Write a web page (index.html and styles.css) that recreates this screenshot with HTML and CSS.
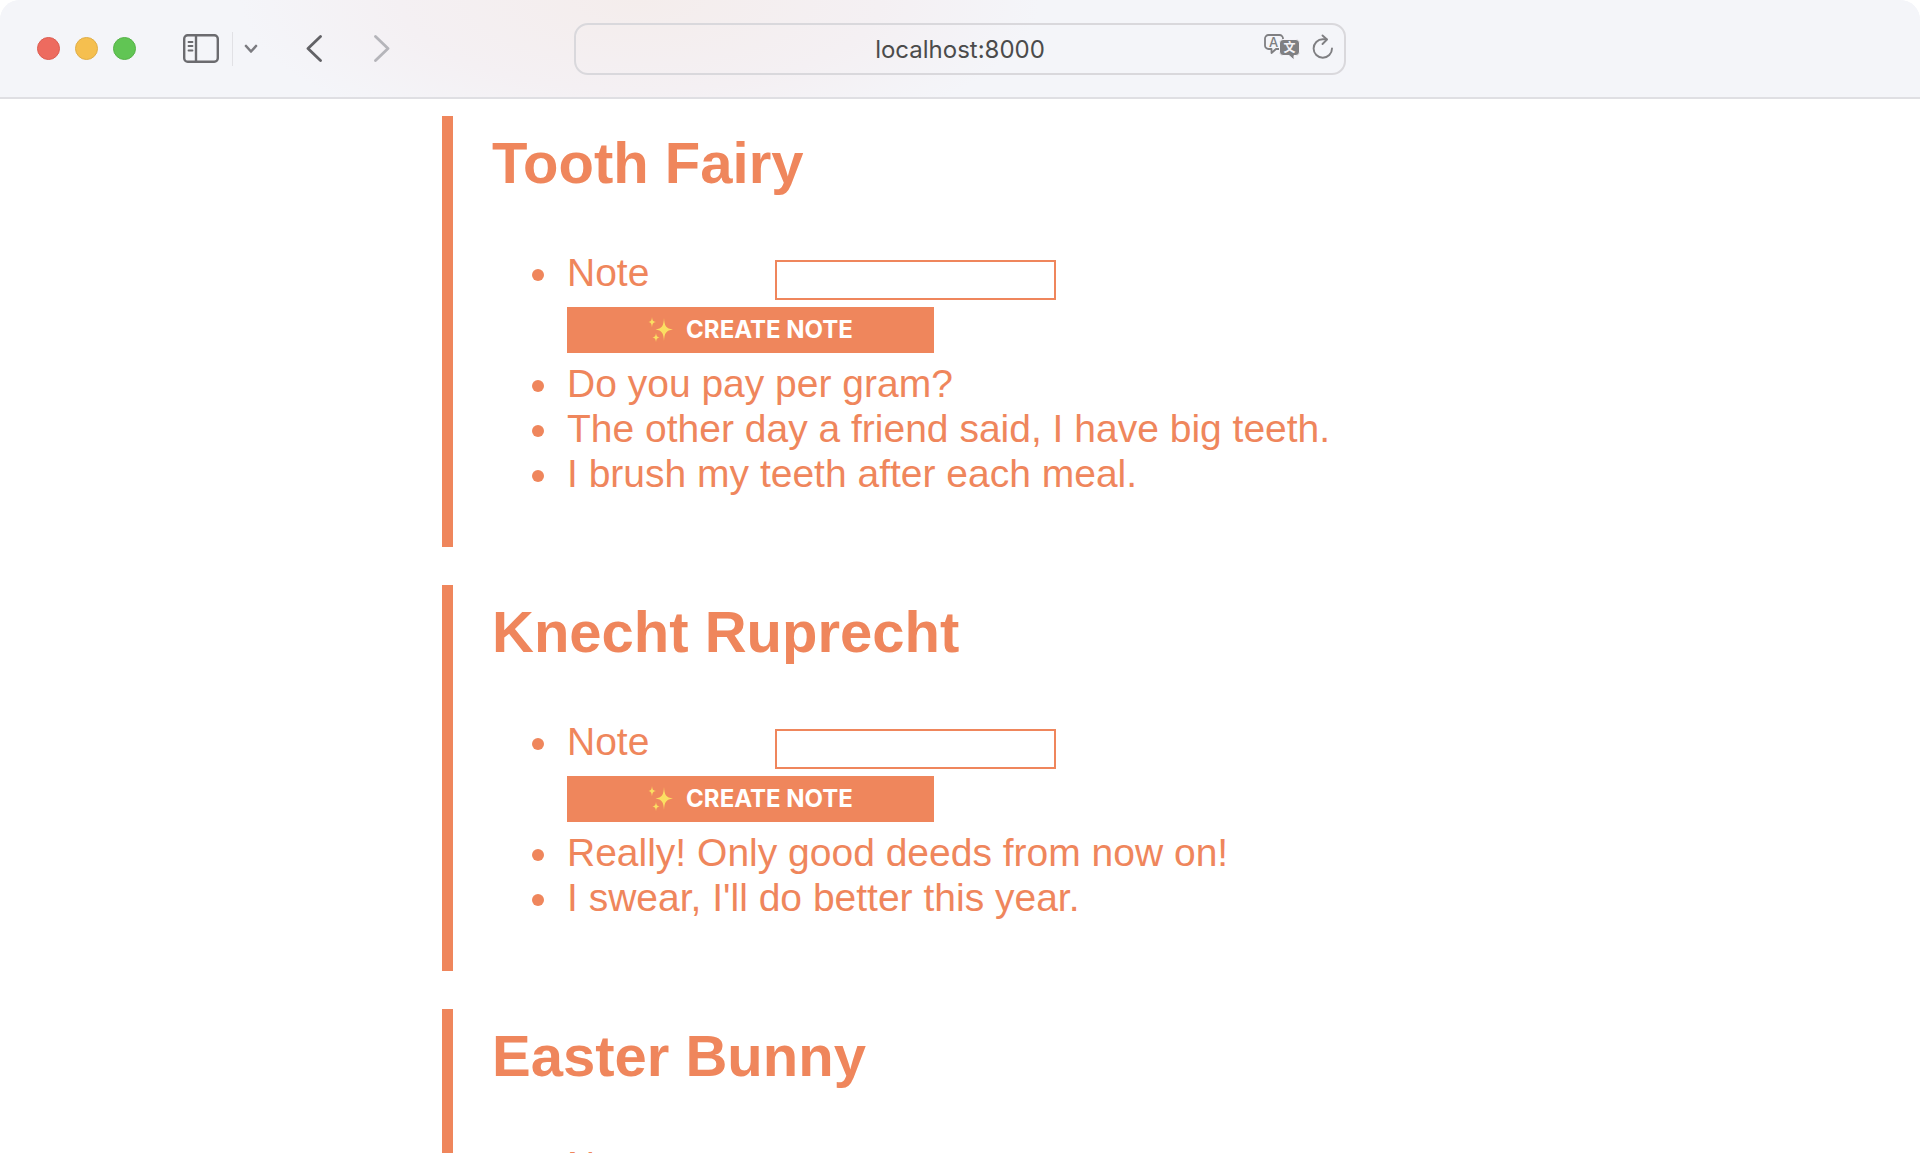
FILE: index.html
```html
<!DOCTYPE html>
<html lang="en">
<head>
    <meta charset="UTF-8">
    <meta name="viewport" content="width=device-width, initial-scale=1.0">
    <title>Notes</title>
    <link rel="stylesheet" href="styles.css">
</head>
<body>
    <!-- Sparkles icon shared by all the create buttons -->
    <svg class="sprite" width="0" height="0" aria-hidden="true">
        <symbol id="sparkles" viewBox="0 0 26 26">
            <path d="M16 2C16.500 10 18 12.500 25 13.500C18 14.500 16.500 17 16 25C15.500 17 14 14.500 7.500 13.500C14 12.500 15.500 10 16 2Z"/>
            <path d="M4 1C4.400 4.500 5 5.500 8 6C5 6.500 4.400 7.500 4 11.500C3.600 7.500 3 6.500 0.500 6C3 5.500 3.600 4.500 4 1Z"/>
            <path d="M8 17C8.400 20 9 21 11.500 21.500C9 22 8.400 23 8 26C7.600 23 7 22 4.500 21.500C7 21 7.600 20 8 17Z"/>
        </symbol>
    </svg>

    <header class="toolbar">
        <div class="toolbar-left">
            <div class="lights">
                <span class="light red"></span>
                <span class="light yellow"></span>
                <span class="light green"></span>
            </div>
            <button type="button" class="tool sidebar-button" aria-label="Sidebar">
                <svg width="36" height="30" viewBox="0 0 36 30" fill="none" stroke="#6b6b6f">
                    <rect x="1.200" y="1.200" width="33.600" height="26.600" rx="3.500" stroke-width="2.400"/>
                    <path d="M13 1.500v26" stroke-width="2.400"/>
                    <path d="M5.500 8h4M5.500 12h4M5.500 16.500h4" stroke-width="1.800" stroke-linecap="round"/>
                </svg>
            </button>
            <button type="button" class="tool tabs-button" aria-label="Tab groups">
                <svg width="14" height="10" viewBox="0 0 14 10" fill="none" stroke="#7b7b80" stroke-width="2.600" stroke-linecap="round" stroke-linejoin="round">
                    <path d="M2 2l5 5.500L12 2"/>
                </svg>
            </button>
            <button type="button" class="tool back-button" aria-label="Back">
                <svg width="16" height="28" viewBox="0 0 16 28" fill="none" stroke="#626266" stroke-width="2.800" stroke-linecap="round" stroke-linejoin="round">
                    <path d="M14.500 1.500L2 13.500l12.500 12"/>
                </svg>
            </button>
            <button type="button" class="tool forward-button" aria-label="Forward">
                <svg width="16" height="28" viewBox="0 0 16 28" fill="none" stroke="#b5b5ba" stroke-width="2.800" stroke-linecap="round" stroke-linejoin="round">
                    <path d="M1.500 1.500l12.500 12L1.500 25.500"/>
                </svg>
            </button>
        </div>

        <div class="address">
            <input type="text" class="address-input" aria-label="Address" value="localhost:8000">
            <div class="address-tools">
                <button type="button" class="tool" aria-label="Translate">
                    <svg width="36" height="28" viewBox="0 0 36 28">
                        <path d="M4.500 2h11a3.500 3.500 0 0 1 3.500 3.500v7a3.500 3.500 0 0 1-3.500 3.500H12l-4.500 4v-4h-3A3.500 3.500 0 0 1 1 12.500v-7A3.500 3.500 0 0 1 4.500 2z" fill="none" stroke="#7f7f82" stroke-width="1.800" stroke-linejoin="round"/>
                        <path d="M19 6.500h13a3.500 3.500 0 0 1 3.500 3.500v9a3.500 3.500 0 0 1-3.500 3.500h-2V27l-5-4.500h-6a3.500 3.500 0 0 1-3.500-3.500v-9A3.500 3.500 0 0 1 19 6.500z" fill="#7f7f82" stroke="#f4f3f8" stroke-width="1"/>
                        <text class="glyph-latin" x="9.500" y="13.500" text-anchor="middle">A</text>
                        <text class="glyph-han" x="25.500" y="19" text-anchor="middle">文</text>
                    </svg>
                </button>
                <button type="button" class="tool" aria-label="Reload">
                    <svg width="22" height="26" viewBox="0 0 22 26" fill="none" stroke="#7f7f82" stroke-width="1.900" stroke-linecap="round" stroke-linejoin="round">
                        <path d="M20 14.500a9.200 9.200 0 1 1-9.200-9.200h3.700"/>
                        <path d="M10.500 1.500l4.500 4-4.500 4.500"/>
                    </svg>
                </button>
            </div>
        </div>
    </header>

    <main class="page">
        <article class="person">
            <h1>Tooth Fairy</h1>
            <ul>
                <li>
                    <form class="note-form">
                        <label for="note1">Note</label>
                        <input type="text" id="note1" name="note">
                        <button type="submit"><svg class="sparkles" aria-hidden="true"><use href="#sparkles"/></svg>Create Note</button>
                    </form>
                </li>
                <li>Do you pay per gram?</li>
                <li>The other day a friend said, I have big teeth.</li>
                <li>I brush my teeth after each meal.</li>
            </ul>
        </article>

        <article class="person">
            <h1>Knecht Ruprecht</h1>
            <ul>
                <li>
                    <form class="note-form">
                        <label for="note2">Note</label>
                        <input type="text" id="note2" name="note">
                        <button type="submit"><svg class="sparkles" aria-hidden="true"><use href="#sparkles"/></svg>Create Note</button>
                    </form>
                </li>
                <li>Really! Only good deeds from now on!</li>
                <li>I swear, I'll do better this year.</li>
            </ul>
        </article>

        <article class="person">
            <h1>Easter Bunny</h1>
            <ul>
                <li>
                    <form class="note-form">
                        <label for="note3">Note</label>
                        <input type="text" id="note3" name="note">
                        <button type="submit"><svg class="sparkles" aria-hidden="true"><use href="#sparkles"/></svg>Create Note</button>
                    </form>
                </li>
            </ul>
        </article>
    </main>
</body>
</html>
```

FILE: styles.css
```css
* {
    box-sizing: border-box;
}

body {
    display: flex;
    flex-direction: column;
    height: 100vh;
    margin: 0;
    overflow: hidden;
    background-color: #fff;
    color: #ef865c;
    font-family: "Liberation Sans", Arial, sans-serif;
    font-size: 39px;
    line-height: 45px;
}

.sprite {
    position: absolute;
}

/* Browser toolbar */
.toolbar {
    display: grid;
    grid-template-columns: 1fr minmax(0, 772px) 1fr;
    flex-shrink: 0;
    align-items: center;
    height: 99px;
    border-bottom: 2px solid #dfdfe3;
    border-radius: 20px 20px 0 0;
    background: radial-gradient(ellipse 400px 150px at 640px 0, #f4edec, #f4f0f3 60%, #f4f5f9) #f4f5f9;
}

.toolbar-left {
    display: flex;
    align-items: center;
    padding-left: 37px;
}

.lights {
    display: flex;
    gap: 15px;
}

.light {
    width: 23px;
    height: 23px;
    border: 1px solid;
    border-radius: 50%;
}

.red {
    border-color: #dd5c50;
    background-color: #ed6b5f;
}

.yellow {
    border-color: #dfae48;
    background-color: #f5bf4f;
}

.green {
    border-color: #56b348;
    background-color: #61c554;
}

.tool {
    display: flex;
    padding: 0;
    border: none;
    background: none;
}

.sidebar-button {
    margin-left: 47px;
}

.tabs-button {
    align-items: center;
    height: 34px;
    margin-left: 13px;
    padding-left: 11px;
    border-left: 1px solid #e1e1e5;
}

.back-button {
    margin-left: 48px;
}

.forward-button {
    margin-left: 52px;
}

.address {
    position: relative;
}

.address-input {
    display: block;
    width: 100%;
    height: 52px;
    padding: 2px 96px 0;
    border: 2px solid #d9d8dc;
    border-radius: 14px;
    background: none;
    color: #4b4b4b;
    font-family: Inter, sans-serif;
    font-size: 24px;
    text-align: center;
}

.address-tools {
    position: absolute;
    top: 0;
    right: 12px;
    display: flex;
    gap: 12px;
    align-items: center;
    height: 48px;
}

.glyph-latin {
    fill: #7f7f82;
    font-family: Inter, sans-serif;
    font-size: 13px;
    font-weight: 500;
}

.glyph-han {
    fill: #f4f3f8;
    font-family: "Noto Sans CJK SC", sans-serif;
    font-size: 12px;
    font-weight: bold;
}

/* Notes */
.page {
    display: flex;
    flex-direction: column;
    gap: 38px;
    width: 100%;
    max-width: 1036px;
    margin: 0 auto;
    padding-top: 17px;
}

.person {
    padding: 12px 0 51px 39px;
    border-left: 11px solid #ef865c;
}

h1 {
    margin: 0 0 53px;
    font-size: 58px;
    line-height: 69px;
}

ul {
    margin: 0;
    padding-left: 70px;
}

li {
    padding-left: 5px;
}

.note-form {
    display: grid;
    grid-template-columns: 208px 281px;
    row-gap: 7px;
    padding-bottom: 8px;
}

.note-form input {
    height: 40px;
    margin-top: 10px;
    padding: 0 8px;
    border: 2px solid #ef865c;
    background-color: #fff;
    color: #ef865c;
    font: inherit;
    font-size: 24px;
}

.note-form button {
    display: flex;
    grid-column: 1 / -1;
    gap: 12px;
    align-items: center;
    justify-content: center;
    width: 367px;
    height: 46px;
    padding: 0 0 2px;
    border: none;
    background-color: #ef865c;
    color: #fff;
    font-family: Inter, sans-serif;
    font-size: 24px;
    font-weight: bold;
    text-transform: uppercase;
    cursor: pointer;
}

.sparkles {
    width: 26px;
    height: 26px;
    fill: #fbdf62;
}
```
